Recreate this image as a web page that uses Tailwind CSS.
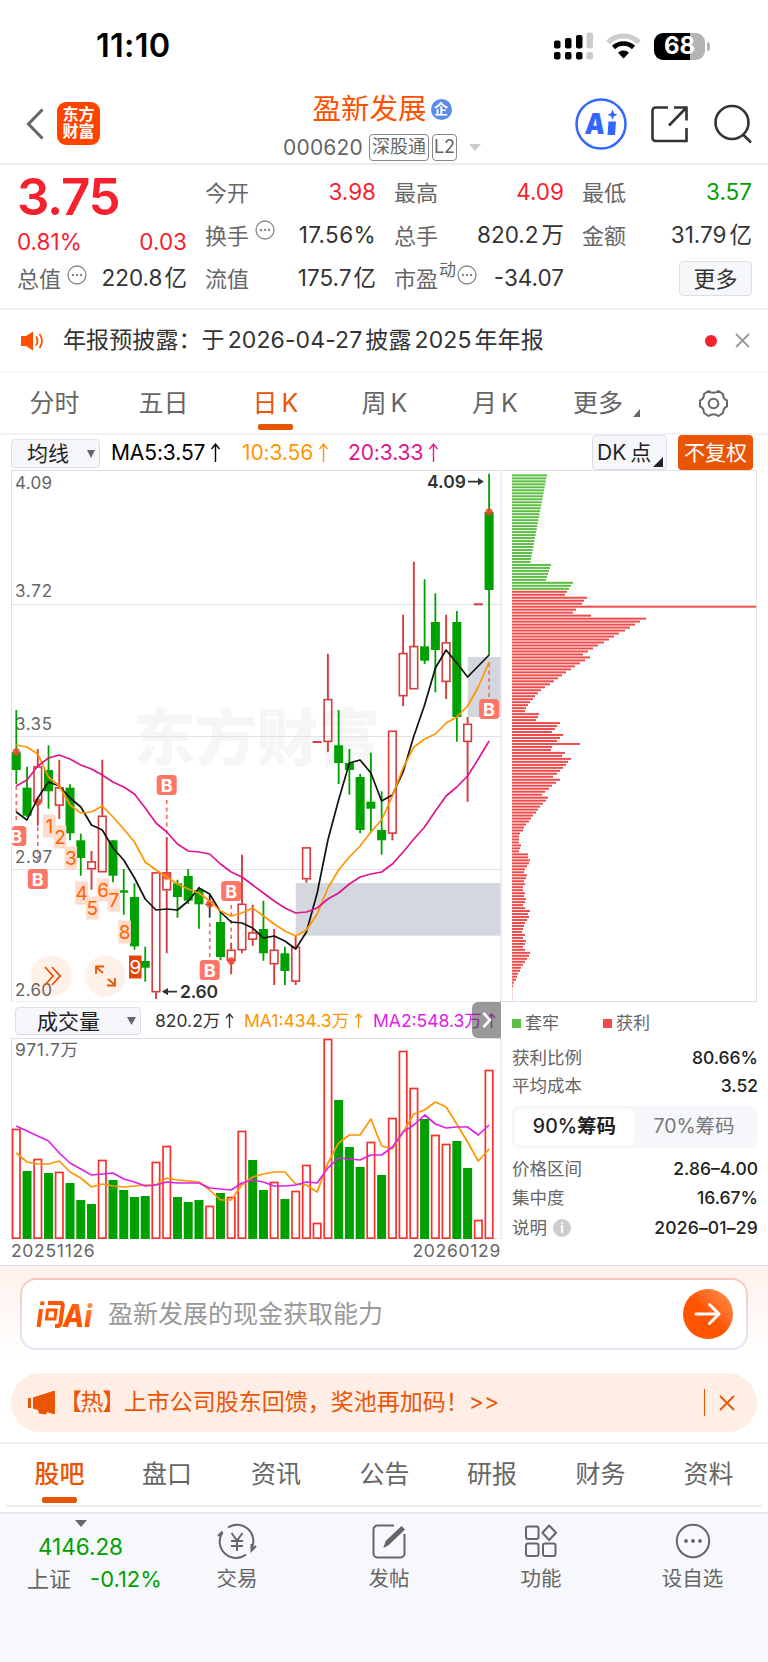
<!DOCTYPE html>
<html lang="zh-CN">
<head>
  <meta charset="UTF-8" />
  <meta name="viewport" content="width=device-width, initial-scale=1.0" />
  <title>盈新发展 000620</title>
  <script src="https://cdn.jsdelivr.net/npm/@tailwindcss/browser@4"></script>
  <style>
    body { font-family: 'Inter', 'Noto Sans CJK SC', sans-serif; }
  </style>
</head>
<body class="w-[768px] h-[1662px] bg-white text-[#333] leading-none whitespace-nowrap overflow-hidden">

  <!-- status bar -->
  <div class="h-[90px] flex items-center justify-between pl-[96px] pr-[58px] pt-[2px]">
    <span class="text-[32.500px] font-semibold text-black tracking-[0.3px]">11:10</span>
    <div class="flex items-center gap-[13px]">
      <svg width="39" height="28" viewBox="0 0 39 28">
        <g fill="#000">
          <rect x="0" y="8.500" width="6.500" height="8" rx="2"/><rect x="11" y="6" width="6.500" height="10.500" rx="2"/><rect x="22" y="3" width="6.500" height="13.500" rx="2"/>
          <rect x="0" y="20" width="6.500" height="7.500" rx="2"/><rect x="11" y="20" width="6.500" height="7.500" rx="2"/><rect x="22" y="20" width="6.500" height="7.500" rx="2"/>
        </g>
        <g fill="#ccc"><rect x="32.500" y="0.500" width="6.500" height="16" rx="2"/><rect x="32.500" y="20" width="6.500" height="7.500" rx="2"/></g>
      </svg>
      <svg width="35" height="26" viewBox="0 0 35 26" fill="none">
        <path d="M2 9.500a22 22 0 0 1 31 0" stroke="#ccc" stroke-width="5"/>
        <path d="M7.500 14.500a14.500 14.500 0 0 1 20 0" stroke="#000" stroke-width="4.500"/>
        <path d="M17.500 25.500l-5.500-5.700a8 8 0 0 1 11 0z" fill="#000"/>
      </svg>
      <div class="flex items-center gap-[2px]">
        <div class="w-[51px] h-[27px] rounded-[9px] bg-linear-to-r from-black from-70% to-[#b3b3b3] to-70% flex items-center justify-center text-white text-[24px] font-bold">68</div>
        <div class="w-[3px] h-[9px] rounded-r-full bg-[#b3b3b3]"></div>
      </div>
    </div>
  </div>

  <!-- title bar -->
  <header class="h-[75px] border-b-2 border-[#ececec] flex justify-between pl-[26px] pr-[15px]">
    <div class="w-[240px] flex items-start gap-[13px] pt-[12px]">
      <svg width="18" height="44" viewBox="0 0 18 44" fill="none" stroke="#666" stroke-width="3"><path d="M16.500 7.500L2.500 22l14 14.500"/></svg>
      <div class="w-[43px] h-[43px] rounded-[9px] bg-[#ff4400] text-white text-[16px] font-bold leading-[17px] text-center pt-[4px]">东方<br>财富</div>
    </div>
    <div class="flex flex-col items-center pt-[5px] -ml-[5px]">
      <div class="flex items-center gap-[4px] h-[28px]">
        <span class="text-[28.500px]">
          <span class="text-[#ff5000]">盈新发展</span>
        </span>
        <span class="w-[21px] h-[21px] rounded-full bg-[#5c8ae8] text-white text-[14px] font-bold flex items-center justify-center">企</span>
      </div>
      <div class="flex items-center h-[28px] mt-[10px] text-[#666]">
        <span class="text-[21px] tracking-[0.2px] mr-[6px]">000620</span>
        <span class="h-[27px] w-[60px] border-[1.5px] border-[#888] rounded-[4px] text-[18px] flex items-center justify-center mr-[3px]">深股通</span>
        <span class="h-[27px] w-[25px] border-[1.5px] border-[#888] rounded-[4px] text-[18px] flex items-center justify-center mr-[12px]">L2</span>
        <svg width="12" height="7"><path d="M0 0h12L6 7z" fill="#ccc"/></svg>
      </div>
    </div>
    <div class="w-[250px] flex justify-end gap-[23px] pt-[8px]">
      <svg width="52" height="52" viewBox="0 0 52 52">
        <circle cx="26" cy="26" r="24.500" fill="#fff" stroke="#3366ff" stroke-width="2.500"/>
        <text x="10" y="36" font-size="29" font-weight="900" fill="#3366ff" transform="skewX(-5) translate(2.500 0)" textLength="20" lengthAdjust="spacingAndGlyphs">A</text>
        <path d="M33.500 23.500h7.500l-1 13.500h-7.500z" fill="#3366ff"/>
        <path d="M37.500 11.500l1.500 3.700 3.500 1.500-3.500 1.500-1.500 3.600-1.500-3.600-3.500-1.500 3.500-1.500z" fill="#3366ff"/>
      </svg>
      <svg width="40" height="52" viewBox="0 0 40 52" fill="none" stroke="#333" stroke-width="2.600">
        <path d="M18 9.500H5.500a3 3 0 0 0-3 3V40a3 3 0 0 0 3 3h31V30M24 9.500h12.500v13M36 10L19 27.500"/>
      </svg>
      <svg width="40" height="52" viewBox="0 0 40 52" fill="none" stroke="#333" stroke-width="2.600"><circle cx="19" cy="24.500" r="16.500"/><path d="M30 36.500l8 8"/></svg>
    </div>
  </header>

  <!-- quote -->
  <section class="h-[145px] border-b-2 border-[#f3f3f5] grid grid-cols-[170px_171px_170px_170px] gap-x-[18px] px-[17px] pt-[6px] text-[22.500px] text-[#333]">
    <div class="text-[#f5222d]">
      <div class="h-[50px] flex items-center text-[51px] font-semibold tracking-[-1.3px]">3.75</div>
      <div class="h-[36px] flex justify-between items-center pt-[6px]"><span>0.81%</span><span>0.03</span></div>
      <div class="h-[43px] flex justify-between items-center text-[#333]"><span class="flex gap-[6px] text-[22px] text-[#666]">总值<svg class="-mt-[3px]" width="20" height="20"><use href="#dots"/></svg></span><span>220.8<span class="ml-[2px]">亿</span></span></div>
    </div>
    <div>
      <div class="h-[43px] flex justify-between items-center"><span class="text-[22px] text-[#666]">今开</span><span class="text-[#f5222d]">3.98</span></div>
      <div class="h-[43px] flex justify-between items-center"><span class="flex gap-[6px] text-[22px] text-[#666]">换手<svg class="-mt-[5px]" width="20" height="20"><use href="#dots"/></svg></span><span class="tracking-[0.4px]">17.56%</span></div>
      <div class="h-[43px] flex justify-between items-center"><span class="text-[22px] text-[#666]">流值</span><span>175.7<span class="ml-[2px]">亿</span></span></div>
    </div>
    <div>
      <div class="h-[43px] flex justify-between items-center"><span class="text-[22px] text-[#666]">最高</span><span class="text-[#f5222d]">4.09</span></div>
      <div class="h-[43px] flex justify-between items-center"><span class="text-[22px] text-[#666]">总手</span><span>820.2<span class="ml-[3px]">万</span></span></div>
      <div class="h-[43px] flex justify-between items-center"><span class="flex text-[22px] text-[#666]">市盈<span class="text-[17px] -mt-[6px] mx-[1px]">动</span><svg class="-mt-[3px]" width="20" height="20"><use href="#dots"/></svg></span><span>-34.07</span></div>
    </div>
    <div>
      <div class="h-[43px] flex justify-between items-center"><span class="text-[22px] text-[#666]">最低</span><span class="text-[#00a000]">3.57</span></div>
      <div class="h-[43px] flex justify-between items-center"><span class="text-[22px] text-[#666]">金额</span><span>31.79<span class="ml-[3px]">亿</span></span></div>
      <div class="h-[43px] flex justify-end items-center"><span class="w-[73px] h-[35px] border border-[#dcdfe8] rounded-[4px] bg-[#f6f7fa] text-[22px] flex items-center justify-center">更多</span></div>
    </div>
  </section>

  <!-- notice -->
  <section class="h-[63px] border-b-2 border-[#f6f6f8] flex items-center pl-[20px] pr-[18px]">
    <svg width="24" height="20" viewBox="0 0 24 20" fill="none"><path d="M1 5h5L13 .5v19l-7-4.500H1z" fill="#ff5000"/><path d="M16 5.500q3 4.500 0 9M19.500 3q5 7 0 14" stroke="#ff5000" stroke-width="1.800"/></svg>
    <span class="ml-[19px] text-[23px] tracking-[0.1px]">年报预披露：于<span class="mx-[3px]">2026-04-27</span>披露<span class="mx-[3px]">2025</span>年年报</span>
    <span class="ml-auto w-[12px] h-[12px] rounded-full bg-[#f5222d] mr-[18px]"></span>
    <svg width="15" height="15" viewBox="0 0 15 15" stroke="#999" stroke-width="1.800"><path d="M1 1l13 13M14 1L1 14"/></svg>
  </section>

  <!-- period tabs -->
  <nav class="h-[62px] border-b-2 border-[#f3f3f5] flex text-[25px] text-[#666] pt-[18px]">
    <span class="w-[109px] text-center h-[27px]">分时</span>
    <span class="w-[109px] text-center">五日</span>
    <span class="w-[115px] flex flex-col items-center text-[#ea5504]"><span>日<span class="ml-[4px]">K</span></span><i class="block w-[35px] h-[6px] rounded-[2px] bg-[#ea5504] mt-[8px]"></i></span>
    <span class="w-[103px] text-center">周<span class="ml-[4px]">K</span></span>
    <span class="w-[118px] text-center">月<span class="ml-[4px]">K</span></span>
    <span class="w-[106px] flex pl-[19px]">更多<svg class="mt-[18px] ml-[10px]" width="7" height="8"><path d="M7 0v8H0z" fill="#666"/></svg></span>
    <svg class="ml-[38px] -mt-[3px]" width="31" height="31" viewBox="0 0 31 31" fill="none" stroke="#666" stroke-width="2"><path d="M10.500 3q5 3.500 10 0l4.500 3q0 5 4 6.500v6q-4 1.500-4 6.500l-4.500 3q-5-3.500-10 0L6 25q0-5-4-6.500v-6q4-1.500 4-6.500z" stroke-linejoin="round"/><circle cx="15.500" cy="15.500" r="4.800"/></svg>
  </nav>

  <!-- indicator row -->
  <div class="h-[35px] flex items-center pl-[11px] text-[21px] text-[#222]">
    <span class="w-[89px] h-[29px] border border-[#dcdfe8] rounded-[4px] bg-[#f6f7fa] flex items-center pl-[15px] gap-[18px] mt-[2px]">均线<svg width="8" height="8"><path d="M0 0h8L4 8z" fill="#666"/></svg></span>
    <span class="w-[130px] pl-[11px] text-black tracking-[-0.1px] flex">MA5:3.57<span class="ml-[5px]"><svg width="11" height="21" viewBox="0 0 11 21" fill="none" stroke="currentColor" stroke-width="1.400"><path d="M5.500 20V2M1.500 7l4-5 4 5"/></svg></span></span>
    <span class="w-[107px] pl-[12px] text-[#ff9500] tracking-[-0.1px] flex">10:3.56<span class="ml-[5px]"><svg width="11" height="21" viewBox="0 0 11 21" fill="none" stroke="currentColor" stroke-width="1.400"><path d="M5.500 20V2M1.500 7l4-5 4 5"/></svg></span></span>
    <span class="w-[255px] pl-[11px] text-[#e0148c] tracking-[-0.1px] flex">20:3.33<span class="ml-[5px]"><svg width="11" height="21" viewBox="0 0 11 21" fill="none" stroke="currentColor" stroke-width="1.400"><path d="M5.500 20V2M1.500 7l4-5 4 5"/></svg></span></span>
    <span class="w-[75px] h-[35px] border border-[#dcdfe8] rounded-[4px] bg-[#f6f7fa] flex items-center pl-[4px] gap-[2px]">DK<span class="ml-[2px]">点</span><svg class="mt-[18px]" width="10" height="10"><path d="M10 0v10H0z" fill="#222"/></svg></span>
    <span class="w-[75px] h-[35px] ml-[11px] rounded-[4px] bg-[#ea5504] text-white flex items-center justify-center">不复权</span>
  </div>

  <!-- charts -->
  <div class="flex h-[796px] border-b border-[#dcdfe6]">
    <div class="w-[502px]">
      <svg id="kline" class="block" width="502" height="532" viewBox="0 470 502 532"></svg>
      <div class="relative h-[36px] pt-[2px] flex items-center pl-[15px] text-[17.500px]">
        <span class="w-[126px] h-[28px] border border-[#dcdfe8] rounded-[4px] bg-[#f6f7fa] flex items-center pl-[21px] gap-[27px] text-[21px] text-[#222]">成交量<svg width="9" height="8"><path d="M0 0h9L4.500 8z" fill="#666"/></svg></span>
        <span class="ml-[14px] w-[89px] flex">820.2万<svg class="ml-[5px]" width="9" height="17" viewBox="0 0 9 17" fill="none" stroke="currentColor" stroke-width="1.300"><path d="M4.500 16V2M1 6l3.500-4L8 6"/></svg></span>
        <span class="w-[129px] text-[#ff9500] flex">MA1:434.3万<svg class="ml-[5px]" width="9" height="17" viewBox="0 0 9 17" fill="none" stroke="currentColor" stroke-width="1.300"><path d="M4.500 16V2M1 6l3.500-4L8 6"/></svg></span>
        <span class="text-[#e020e8] flex">MA2:548.3万<svg class="ml-[5px]" width="9" height="17" viewBox="0 0 9 17" fill="none" stroke="currentColor" stroke-width="1.300"><path d="M4.500 16V2M1 6l3.500-4L8 6"/></svg></span>
        <span class="absolute right-[1px] top-0 w-[29px] h-[36px] rounded-l-[6px] bg-[#333]/50 flex items-center justify-center"><svg width="10" height="18" viewBox="0 0 10 18" fill="none" stroke="#fff" stroke-width="2.600"><path d="M1.500 2l6.500 7-6.500 7"/></svg></span>
      </div>
      <svg id="volume" class="block" width="502" height="201" viewBox="0 1038 502 201"></svg>
      <div class="flex justify-between items-center h-[24px] pl-[11px] pr-[1px] text-[17.500px] tracking-[0.7px] text-[#666]"><span>20251126</span><span>20260129</span></div>
    </div>
    <div class="w-[256px] pl-[10px]">
      <svg id="chips" class="block -ml-[10px]" width="256" height="532" viewBox="502 470 256 532"></svg>
      <div class="h-[42px] flex items-center text-[17px] text-[#666]">
        <i class="w-[9px] h-[9px] bg-[#5ebd45]"></i><span class="ml-[4px] w-[78px]">套牢</span>
        <i class="w-[9px] h-[9px] bg-[#f04b4b]"></i><span class="ml-[4px]">获利</span>
      </div>
      <div class="h-[28px] flex items-center justify-between text-[17.500px] text-[#666]">获利比例<span class="font-medium text-[#222]">80.66%</span></div>
      <div class="h-[28px] flex items-center justify-between text-[17.500px] text-[#666]">平均成本<span class="font-medium text-[#222]">3.52</span></div>
      <div class="h-[42px] mt-[6px] w-[245px] rounded-[7px] bg-[#f6f7fa] p-[3px] flex text-[19.500px] text-[#777]">
        <span class="w-[119px] h-[36px] rounded-[5px] bg-white flex items-center justify-center font-medium text-[#222]">90%<b>筹码</b></span>
        <span class="flex-1 flex items-center justify-center">70%筹码</span>
      </div>
      <div class="h-[30px] mt-[6px] flex items-center justify-between text-[17.500px] text-[#666]">价格区间<span class="font-medium text-[#222]">2.86–4.00</span></div>
      <div class="h-[28px] flex items-center justify-between text-[17.500px] text-[#666]">集中度<span class="font-medium text-[#222]">16.67%</span></div>
      <div class="h-[32px] flex items-center text-[17.500px] text-[#666]">说明<span class="ml-[6px] w-[18px] h-[18px] rounded-full bg-[#ccc] text-white text-[13px] font-bold flex items-center justify-center">i</span><span class="ml-auto font-medium text-[#222] tracking-[0.2px]">2026–01–29</span></div>
    </div>
  </div>

  <!-- ask AI -->
  <section class="h-[96px] bg-linear-to-b from-[#fff1ec] to-white px-[20px] pt-[12px]">
    <div class="h-[72px] rounded-[16px] bg-linear-to-b from-[#ffc4bb] to-[#dfe6fb] p-[2px]">
      <div class="h-full rounded-[14px] bg-white flex items-center pl-[14px] pr-[13px]">
        <svg width="64" height="40" viewBox="0 -3 64 40" fill="none">
          <defs><linearGradient id="ai" x1="0" y1="1" x2="1" y2="0"><stop offset="0.500" stop-color="#ff5500"/><stop offset="1" stop-color="#ff9a50"/></linearGradient></defs>
          <path d="M5 12L2.500 30M6.500 4.500L6 8M12 6h12.500q2.500 0 2.200 2.500L24.500 26q-.3 3-3.500 3H19" stroke="#ff5500" stroke-width="4"/>
          <path d="M11.500 13h8.500l-1 9h-8.500z" stroke="#ff5500" stroke-width="3"/>
          <text x="27" y="30" font-size="31" font-weight="800" font-style="italic" fill="url(#ai)" textLength="29" lengthAdjust="spacingAndGlyphs">Ai</text>
        </svg>
        <span class="ml-[8px] text-[25px] text-[#999]">盈新发展的现金获取能力</span>
        <span class="ml-auto w-[50px] h-[50px] rounded-full bg-linear-to-tr from-[#ff5500] from-50% to-[#ff9448] flex items-center justify-center"><svg width="28" height="24" viewBox="0 0 28 24" fill="none" stroke="#fff" stroke-width="3" stroke-linecap="round" stroke-linejoin="round"><path d="M2 12h23M15.500 2.500L25 12l-9.500 9.500"/></svg></span>
      </div>
    </div>
  </section>

  <!-- promo -->
  <section class="h-[82px] border-b-2 border-[#eee] px-[11px] pt-[11px]">
    <div class="h-[59px] rounded-full bg-[#ffeee6] text-[#ea5504] flex items-center pl-[17px] pr-[22px]">
      <svg width="28" height="26" viewBox="0 0 28 26" fill="#ea5504"><path d="M0 8h3v10H0zM5 7.500L25 1h2v23h-2l-6-2-1 2.500-7-1-1-3.500-5-1.500z"/></svg>
      <span class="ml-[3px] text-[23px]"><span class="tracking-[-1.400px]">【热】</span>上市公司股东回馈，奖池再加码！&gt;&gt;</span>
      <i class="ml-auto w-[1.500px] h-[27px] bg-[#ea5504] mr-[14px]"></i>
      <svg width="16" height="16" viewBox="0 0 16 16" stroke="#ea5504" stroke-width="1.800"><path d="M1 1l14 14M15 1L1 15"/></svg>
    </div>
  </section>

  <!-- content tabs -->
  <nav class="h-[63px] mx-[6px] border-b-2 border-[#efeff1] flex text-[25px] text-[#666] pt-[18px]">
    <span class="w-[107px] flex flex-col items-center text-[#ea5504] font-medium">股吧<i class="block w-[35px] h-[6px] rounded-[2px] bg-[#ea5504] mt-[10px]"></i></span>
    <span class="w-[108px] text-center">盘口</span>
    <span class="w-[110px] text-center">资讯</span>
    <span class="w-[107px] text-center">公告</span>
    <span class="w-[108px] text-center">研报</span>
    <span class="w-[109px] text-center">财务</span>
    <span class="w-[107px] text-center">资料</span>
  </nav>

  <!-- bottom bar -->
  <footer class="mt-[5px] h-[152px] border-t-2 border-[#e4e5e8] bg-[#f6f8fb] flex text-[20.500px] text-[#666]">
    <div class="w-[161px] flex flex-col items-center">
      <svg class="mt-[6px]" width="12" height="7"><path d="M0 0h12L6 7z" fill="#666"/></svg>
      <span class="mt-[9px] text-[22.500px] text-[#00a000]">4146.28</span>
      <span class="mt-[9px] flex w-full items-center pl-[27px]"><span class="text-[22px]">上证</span><span class="ml-[19px] text-[22px] text-[#00a000]">-0.12%</span></span>
    </div>
    <div class="w-[152px] flex flex-col items-center pt-[6px]">
      <svg width="42" height="42" viewBox="0 0 42 42" fill="none" stroke="#666" stroke-width="2">
        <path d="M12 7.500A16.300 16.300 0 0 1 36 27.500M30 34.500A16.300 16.300 0 0 1 6.500 12.500M2 16l4.500-4.500M40 26l-4.500 4.500V24"/>
        <path d="M15.500 13l5.500 7.500 5.500-7.500M21 20.500V31M15 21h12M15 26h12"/>
      </svg>
      <span class="mt-[7px]">交易</span>
    </div>
    <div class="w-[152px] flex flex-col items-center pt-[6px]">
      <svg width="42" height="42" viewBox="0 0 42 42" fill="none" stroke="#666" stroke-width="2">
        <path d="M26 5.500H9.500a4 4 0 0 0-4 4v24a4 4 0 0 0 4 4h23a4 4 0 0 0 4-4V14"/>
        <path d="M17 26l1.500-4.500L33.500 7.500l2 2L20 24.500z" fill="#666"/>
      </svg>
      <span class="mt-[7px]">发帖</span>
    </div>
    <div class="w-[152px] flex flex-col items-center pt-[6px]">
      <svg width="42" height="42" viewBox="0 0 42 42" fill="none" stroke="#666" stroke-width="2">
        <rect x="6" y="6.500" width="12.500" height="12.500" rx="2"/><rect x="6" y="23.500" width="12.500" height="12.500" rx="2"/><rect x="23" y="23.500" width="12.500" height="12.500" rx="2"/>
        <path d="M29.200 5.500l6.800 7.300-6.800 7.300-6.800-7.300z" stroke-linejoin="round"/>
      </svg>
      <span class="mt-[7px]">功能</span>
    </div>
    <div class="w-[151px] flex flex-col items-center pt-[6px]">
      <svg width="42" height="42" viewBox="0 0 42 42"><circle cx="21" cy="21" r="16.200" fill="none" stroke="#666" stroke-width="2"/><g fill="#666"><circle cx="14" cy="21" r="1.900"/><circle cx="21" cy="21" r="1.900"/><circle cx="28" cy="21" r="1.900"/></g></svg>
      <span class="mt-[7px]">设自选</span>
    </div>
  </footer>

  <svg width="0" height="0">
    <symbol id="dots" viewBox="0 0 20 20"><circle cx="10" cy="10" r="9" fill="none" stroke="#888" stroke-width="1.300"/><g fill="#888"><circle cx="6" cy="10" r="1.200"/><circle cx="10" cy="10" r="1.200"/><circle cx="14" cy="10" r="1.200"/></g></symbol>
  </svg>

  <script>
    const RED = '#d83b3b', GREEN = '#00a000', VRED = '#f9302c';
    const X = i => 16.3 + 10.745 * i;

    const line = (ys, color) =>
      `<polyline points="${ys.map((y, i) => X(i).toFixed(1) + ',' + y).join(' ')}" fill="none" stroke="${color}" stroke-width="1.7" stroke-linejoin="round"/>`;

    // [type, high, body top, body bottom, low]
    const candles = [
      ['g',710,752.3,770,784],['g',766.7,787.7,815.7,817],['r',749,766.3,802.3,825.7],['g',745.3,770,791.3,808.7],
      ['r',759.7,787.3,805.7,819],['g',784.3,787.7,833.3,840.3],['g',833.7,840.3,858,875.7],['r',851,861.3,869.3,889.7],
      ['r',759.7,815.7,872.3,872.3],['g',840.3,840.3,875.7,882.3],['g',869,890.3,892.7,914.7],['g',883.3,897,946.3,949.7],
      ['g',946.7,961,967.7,981.7],['r',872.3,872.3,992.3,999],['r',837,872.3,890.3,953.3],['g',879.7,883.3,897,917.7],
      ['g',869,876,900.7,904],['g',886.7,890,904.3,928.7],['k',895,903.8,904.8,917.7],['g',910.7,922,957,960.3],
      ['r',943,949.7,961,974.3],['r',854.7,903.7,950.3,953.3],['r',904.7,932.3,939.7,945.7],['g',900.7,929,953.3,960.7],
      ['r',929,949.7,964.3,985],['g',946.7,953.3,971,985],['r',935.7,946.7,981.7,985],['r',847.3,847.3,879.3,882.7],
      ['-',0,741,742.5,0],['r',653.7,699,742,752.3],['g',710,745.3,763,784],['g',749,763,770,794.7],
      ['g',773.7,777,830,833.3],['g',752.7,801.7,808.7,833],['g',791.3,830,840.3,854.7],['r',730.7,730.7,833.7,840.3],
      ['r',614.7,653,696.3,706.3],['r',561.7,646,689.3,689.3],['g',579.3,646.3,660.7,664],['g',593.3,622,650,692.3],
      ['r',614.7,642.3,682,699],['g',611,622,717,741.7],['r',717,723.7,742,801.7],['-',0,603.3,604.8,0],['g',473.7,512,590,655]
    ];
    const ma5 = [812,820,798,782,786,798,807,825,830,848,860,878,899,910,909,910,901,888,894,912,922,923,928,938,936,941,949,932,893,840,800,763,760,773,801,795,772,736,705,668,650,663,677,666,655];
    const ma10 = [745,747,754,777,786,805,813,812,806,817,829,842,862,870,877,884,889,893,901,911,916,913,908,916,924,931,936,930,914,888,870,857,846,832,820,796,768,747,739,734,723,717,706,687,662];
    const ma20 = [786,780,766,758,755,759,765,769,775,782,787,794,808,823,832,844,851,852,854,864,872,877,885,893,901,908,913,912,908,899,893,884,877,874,872,864,852,839,827,811,796,787,776,759,741];

    let k = '<rect x="295.700" y="883" width="205" height="52.700" fill="#d4d8de"/><rect x="467.700" y="657" width="33" height="60" fill="#d4d8de"/>';
    k += '<text x="133" y="761" font-size="62" font-weight="900" fill="#f6f6f6" textLength="247">东方财富</text>';
    k += '<path d="M11.500 604.500H501M11.500 736.500H501M11.500 869.500H501" stroke="#dfe3ec" fill="none"/><rect x="11.500" y="470.500" width="489.500" height="531.500" fill="none" stroke="#dcdfe6"/>';
    k += '<g fill="#fff0e8"><circle cx="51.300" cy="976" r="20.500"/><circle cx="105.500" cy="976" r="20.500"/></g>';
    [['4.09',489],['3.72',597],['3.35',730],['2.97',863],['2.60',996]].forEach(([t, y]) => {
      k += `<text x="15" y="${y}" font-size="17" fill="#666" textLength="37">${t}</text>`;
    });
    candles.forEach(([t, h, a, b, l], i) => {
      const x = X(i);
      if (t === '-') { k += `<rect x="${x - 4.5}" y="${a}" width="9" height="2" fill="${RED}"/>`; return; }
      const c = t === 'g' ? GREEN : t === 'k' ? '#333' : RED;
      if (t === 'r') {
        k += `<path d="M${x} ${h}V${a}M${x} ${b}V${l}" stroke="${c}" stroke-width="1.9"/><rect x="${x - 3.8}" y="${a + .6}" width="7.6" height="${b - a - 1.2}" fill="none" stroke="${c}" stroke-width="1.6"/>`;
      } else {
        k += `<path d="M${x} ${h}V${l}" stroke="${c}" stroke-width="1.8"/><rect x="${x - 4.5}" y="${a}" width="9" height="${b - a}" fill="${c}"/>`;
      }
    });
    // signal dots and dashed leaders
    [[0,752],[2,802],[14,876],[18,904],[20,961],[44,512]].forEach(([i, y]) => { k += `<circle cx="${X(i)}" cy="${y}" r="3.700" fill="#e8482e" fill-opacity=".85"/>`; });
    [[0,786,822],[2,827,864],[14,800,837],[18,923,957],[20,905,943],[44,663,697]].forEach(([i, a, b]) => {
      k += `<path d="M${X(i)} ${a}V${b}" stroke="#f4685c" stroke-width="1.600" stroke-dasharray="4 3.500"/>`;
    });
    // nine-turn counters
    [826,837,858,893,908,890,900,932,967].forEach((y, n) => {
      const x = X(n + 3) + .8, last = n === 8;
      k += `<rect x="${x - 6.3}" y="${y - 11.5}" width="12.600" height="23" fill="${last ? '#e5440f' : '#ffdccb'}"/><text x="${x}" y="${y + 7}" font-size="19" text-anchor="middle" fill="${last ? '#fff' : '#ff6200'}">${n + 1}</text>`;
    });
    k += line(ma5, '#111') + line(ma10, '#ff9500') + line(ma20, '#e0148c');
    [[0,836],[2,879],[14,785],[18,970],[20,891],[44,709]].forEach(([i, y]) => {
      const x = X(i), left = Math.max(x - 10, 12);
      k += `<rect x="${left}" y="${y - 10}" width="${x + 10 - left}" height="20" rx="3.500" fill="#ff7566"/><text x="${x}" y="${y + 6.5}" font-size="18" font-weight="700" text-anchor="middle" fill="#fff">B</text>`;
    });
    k += '<g font-size="17.500" font-weight="600" fill="#333"><text x="427" y="488" textLength="39">4.09</text><text x="180" y="998" textLength="38">2.60</text></g>';
    k += '<path d="M468 481.600h13M163 991.600h14" stroke="#333" stroke-width="1.600"/><path d="M478 478l6 3.600-6 3.600zM168 988l-6 3.600 6 3.600z" fill="#333"/>';
    k += '<g stroke="#ea5504" stroke-width="1.800" fill="none"><path d="M45 967l8 9-8 9M52 967l8 9-8 9"/><path d="M103 973l-7-6M96 974v-7.500h8M108 979l7 6M115 978v7.500h-8"/></g>';
    document.getElementById('kline').innerHTML = k;

    // volume: positive = up (hollow), negative = down (solid)
    const vol = [110,-68,80,-66,67,-56,-39,-35,79,-59,-49,-42,-43,77,93,-42,-37,-39,33,-46,42,108,-79,-49,57,-40,48,74,16,200,-139,-92,-72,97,-64,121,188,151,-120,104,95,-98,-71,19,169];
    const vma1 = [1153,1162,1164,1164,1161,1172,1178,1187,1184,1186,1187,1186,1185,1185,1178,1180,1181,1182,1190,1200,1200,1185,1177,1174,1172,1172,1184,1185,1192,1163,1143,1135,1135,1119,1146,1149,1132,1114,1110,1102,1107,1124,1142,1161,1149];
    const vma2 = [1126,1131,1136,1141,1153,1163,1169,1175,1174,1173,1179,1182,1186,1185,1182,1183,1183,1183,1188,1189,1190,1183,1180,1182,1186,1186,1185,1182,1183,1168,1158,1159,1160,1155,1155,1147,1132,1125,1115,1124,1128,1127,1127,1135,1125];
    let v = '<rect x="11.500" y="1038.500" width="489.500" height="200.500" fill="none" stroke="#dcdfe6"/><text x="15" y="1055.500" font-size="17.500" fill="#666" textLength="63">971.7万</text>';
    vol.forEach((n, i) => {
      const h = Math.abs(n), x = X(i);
      v += n < 0 ? `<rect x="${x - 4.5}" y="${1239 - h}" width="9" height="${h}" fill="${GREEN}"/>`
                 : `<rect x="${x - 3.7}" y="${1239 - h + .5}" width="7.400" height="${h - 1.3}" fill="#fff" stroke="${VRED}" stroke-width="1.700"/>`;
    });
    document.getElementById('volume').innerHTML = v + line(vma1, '#ff9500') + line(vma2, '#e020e8');

    // chip distribution, one row per price step
    const chips = [];
    for (let i = 0; i < 30; i++) chips.push(35 - i * .57);
    chips.push(39,38,37,36,35,34,61,59,57, 55,53,75,72,70,244,64,61,79,134,128,123,118,113,107,102,97,92,86,81,76,71,
      78,73,68,63,59,54,50,46,42,38,33,29,26,23,21,18,16,14,13,27,26,24,48,45,43,40,51,48,45,68,40,39,53,50,59,56,54,51,48,45,41,48,44,40,37,33,30,36,34,31,28,26,24,21,19,17,14,12,11,8,
      7,7,7,9,8,7,16,16,18,17,15,13,12,15,14,12,13,11,11,13,12,14,13,11,13,18,16,17,15,13,12,11,10,13,11,14,13,11,13,18,17,15,13,11,9,8,6,5,4,2,1);
    let c = '<path d="M502 470.500H756.500V1002M502 1001.500H757" fill="none" stroke="#dcdfe6"/><path d="M512.500 985V1001" stroke="#fbd5d5"/>';
    chips.forEach((w, i) => {
      c += `<rect x="512" y="${(474.4 + i * 2.984).toFixed(2)}" width="${w}" height="2" fill="${i < 39 ? '#5ebd45' : '#f04b4b'}"/>`;
    });
    document.getElementById('chips').innerHTML = c;
  </script>

</body>
</html>
